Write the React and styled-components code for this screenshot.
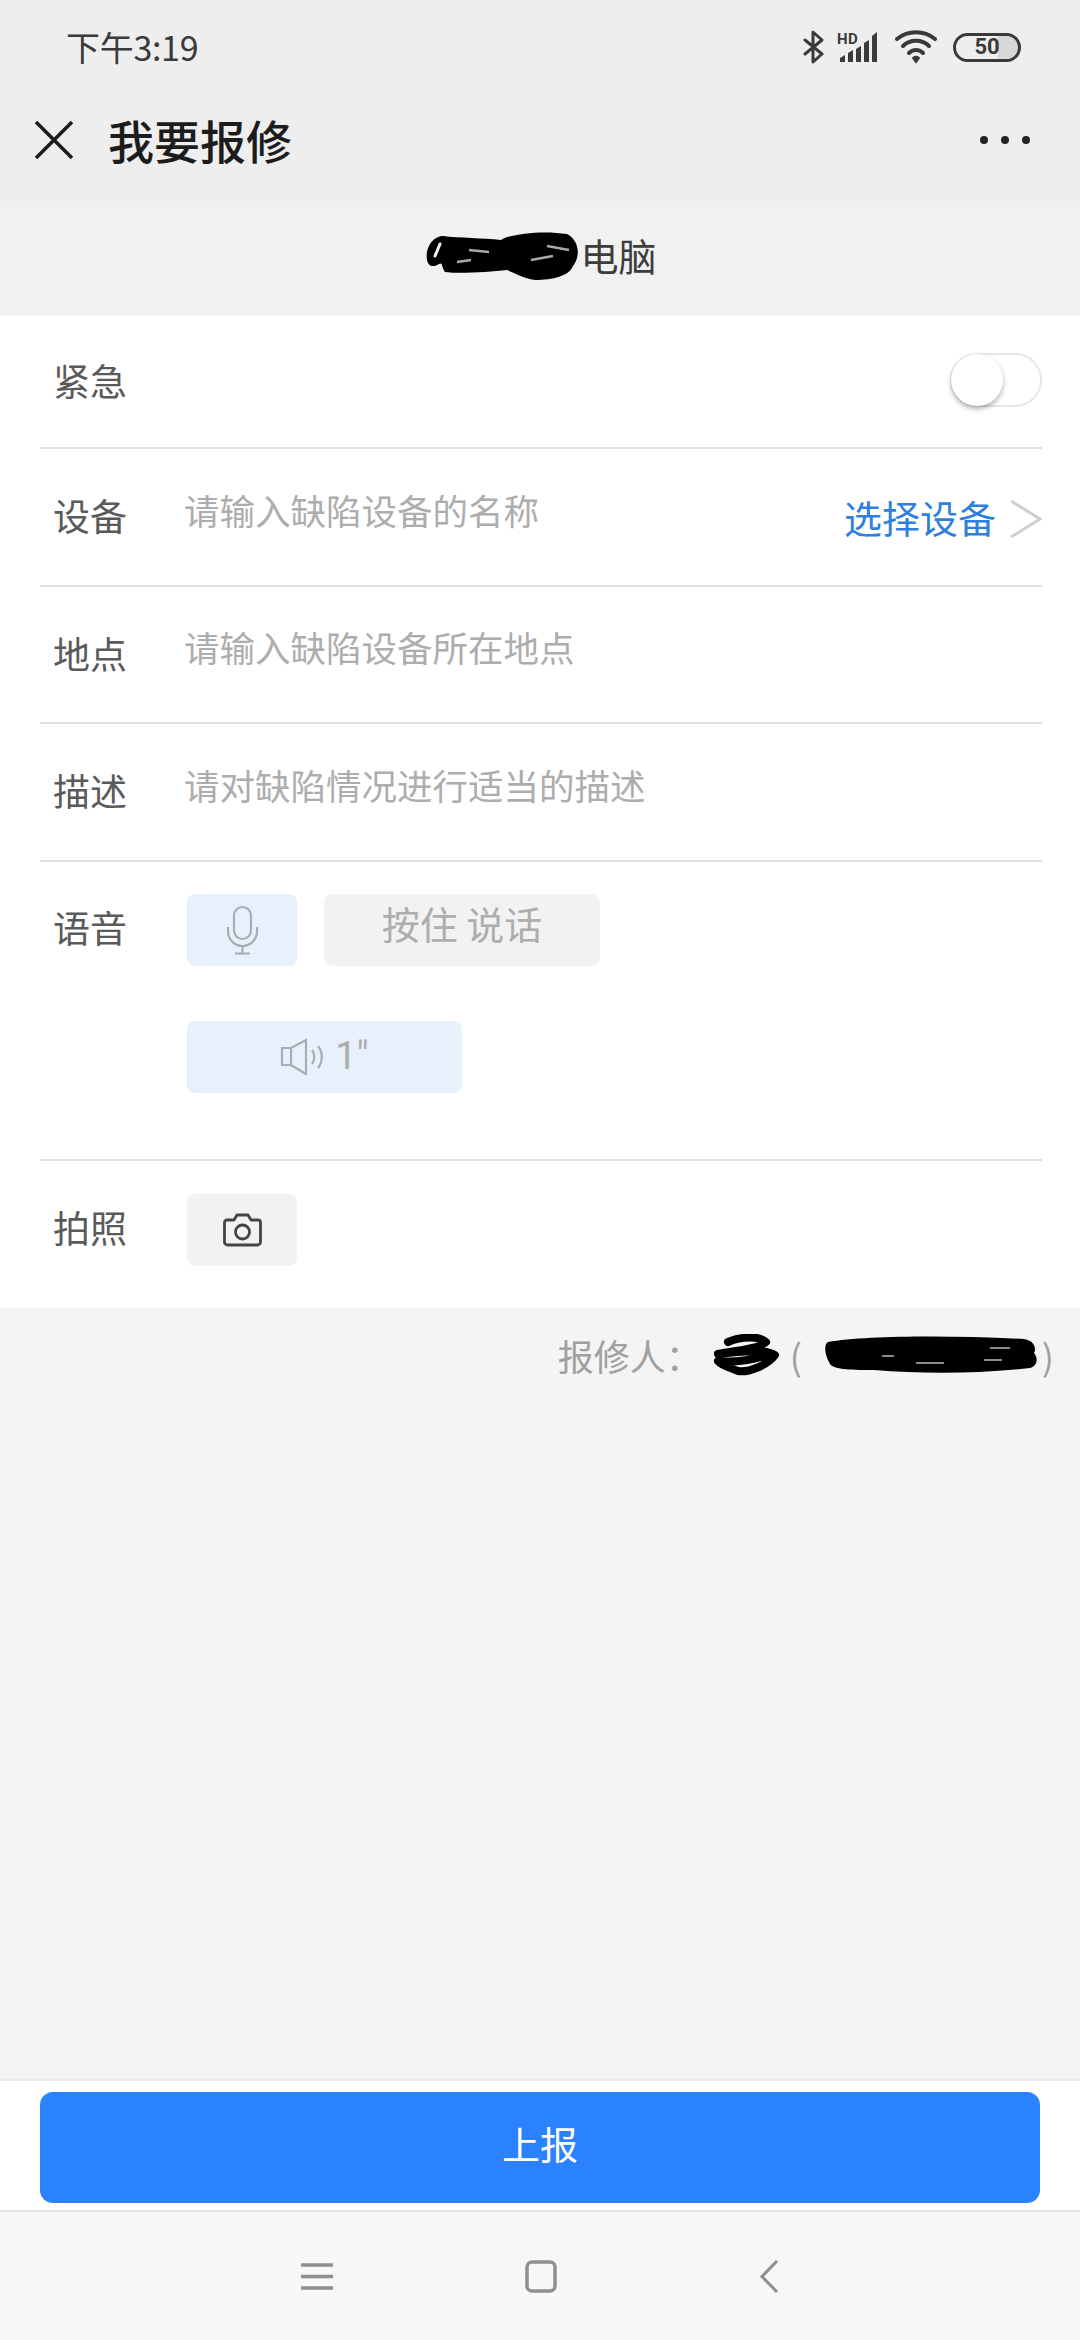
import React from "react";
import styled, { createGlobalStyle } from "styled-components";

const Global = createGlobalStyle`
  html, body { margin: 0; padding: 0; background: #f4f4f4; }
  * { box-sizing: border-box; }
  body { font-family: "Noto Sans CJK SC", "Noto Sans", sans-serif; }
`;

const Page = styled.div`
  width: 1080px; height: 2340px; display: flex; flex-direction: column; overflow: hidden; background: #f4f4f4;
`;
const TopChrome = styled.header`
  height: 207px; background: #eeeeee; display: flex; flex-direction: column;
`;
const StatusBar = styled.div`
  height: 94px; display: flex; align-items: center; justify-content: space-between; padding: 0 59px 0 66px;
`;
const Time = styled.span`
  font-size: 34px; color: #3a3a3a; line-height: 1; font-family: "Noto Sans CJK SC", sans-serif; letter-spacing: -0.3px;
`;
const StatusIcons = styled.div`
  display: flex; align-items: center; height: 40px;
`;
const Battery = styled.span`
  width: 68px; height: 29px; margin-left: 16px; border: 3px solid #3a3a3a; border-radius: 15px;
  display: flex; align-items: center; justify-content: center;
  font: 700 22px/1 "Roboto", sans-serif; color: #3a3a3a;
  background: linear-gradient(90deg, transparent 68%, #d8d8d8 68%);
`;
const NavBar = styled.div`
  height: 94px; display: flex; align-items: center; padding: 0 50px 2px 34px;
`;
const Title = styled.h1`
  margin: 0 0 0 34px; flex: 1; font-size: 46px; font-weight: 500; color: #1c1c1c; line-height: 1.2;
`;
const Dots = styled.div`
  display: flex; gap: 13px;
  i { width: 8px; height: 8px; border-radius: 50%; background: #222; display: block; }
`;
const SubHeader = styled.div`
  height: 109px; background: #f1f1f1; display: flex; align-items: center; justify-content: center; padding-bottom: 14px;
  font-size: 38px; color: #3c3c3c;
`;
const Drawing = styled.svg`
  display: block; flex: none;
`;
const Form = styled.section`
  background: #fff; height: 992px; padding: 0 38px 0 40px; display: flex; flex-direction: column; flex: none;
`;
const Row = styled.div`
  height: ${(p) => p.$h}px; display: flex; flex: none;
  align-items: ${(p) => (p.$top ? "flex-start" : "center")};
  padding-top: ${(p) => p.$pt || 0}px;
  border-bottom: ${(p) => (p.$last ? "none" : "2px solid #dfdfdf")};
`;
const Label = styled.span`
  width: 147px; flex: none; padding-left: 13px; font-size: 37px; color: #5a5a5a; line-height: 72px;
  margin: ${(p) => (p.$top ? "-3px 0 0" : "0 0 4px")};
`;
const Placeholder = styled.span`
  flex: 1; font-size: 35.5px; color: #adadad; margin: 0 0 15px -3px; line-height: 50px;
`;
const LinkText = styled.span`
  font-size: 38px; color: #2f80dc; line-height: 50px;
`;
const Toggle = styled.span`
  margin: -3px 0 0 auto; width: 92px; height: 54px; border: 2px solid #e6e6e6; border-radius: 27px; background: #fff;
  display: flex; align-items: center;
`;
const Knob = styled.span`
  width: 52px; height: 52px; border-radius: 50%; background: #fff; margin-left: -1px;
  box-shadow: 0 3px 5px rgba(0,0,0,.3);
`;
const VoiceCol = styled.div`
  display: flex; flex-direction: column; gap: 55px;
`;
const BtnLine = styled.div`
  display: flex; gap: 27px;
`;
const Tile = styled.div`
  width: ${(p) => p.$w}px; height: 72px; border-radius: 8px; background: ${(p) => (p.$blue ? "#e8f0fc" : "#f2f2f2")};
  display: flex; align-items: center; justify-content: center; gap: 10px;
  font-size: 38px; color: #adadad; line-height: 1;
`;
const TileText = styled.span`
  margin-bottom: ${(p) => p.$mb || 0}px; font-family: ${(p) => (p.$num ? '"Roboto", sans-serif' : "inherit")};
`;
const Reporter = styled.div`
  height: 94px; display: flex; align-items: center; justify-content: flex-end; padding-right: 26px;
  font-size: 36px; color: #a0a0a0; flex: none;
`;
const Colon = styled.span`
  width: 46px;
`;
const Paren = styled.span`
  margin: ${(p) => p.$m};
`;
const Spacer = styled.div`
  flex: 1;
`;
const Footer = styled.div`
  height: 133px; background: #fff; border-top: 2px solid #ebebeb; padding: 11px 40px 0; flex: none;
  border-bottom: 2px solid #e2e2e2;
`;
const Submit = styled.button`
  width: 1000px; height: 111px; border: 0; border-radius: 13px; background: #2b82ff; color: #fff;
  font: 400 38px/1 "Noto Sans CJK SC", sans-serif; padding: 0 0 10px; display: block;
`;
const SysNav = styled.nav`
  height: 128px; background: #f7f7f7; display: flex; align-items: center; padding-left: 301px; flex: none;
`;
const NavGap = styled.span`
  width: ${(p) => p.$w}px; flex: none;
`;

export default function App() {
  return (
    <Page>
      <Global />
      <TopChrome>
        <StatusBar>
          <Time>下午3:19</Time>
          <StatusIcons>
            <Drawing width="22" height="34" viewBox="0 0 22 34" fill="none" stroke="#3a3a3a" strokeWidth="3">
              <path d="M2 10 L19 24 L10 32 V2 L19 10 L2 24" strokeLinejoin="round" strokeLinecap="round" />
            </Drawing>
            <Drawing width="42" height="32" viewBox="0 0 42 32" style={{ marginLeft: 12 }} fill="#3a3a3a">
              <text x="0" y="13" fontFamily="Roboto, sans-serif" fontWeight="700" fontSize="15" letterSpacing="0.5">HD</text>
              <path d="M1 31 v-4 l5 -3 v7z M9 31 V22 l5 -3 V31z M17 31 V18 l5 -3 V31z M25 31 V12 l5 -3 V31z M33 31 V5 l5 -4 V31z" transform="translate(2 0)" />
            </Drawing>
            <Drawing width="42" height="34" viewBox="0 0 42 34" style={{ marginLeft: 16 }} fill="none" stroke="#3a3a3a" strokeWidth="4" strokeLinecap="round">
              <path d="M2 9 C13 0 29 0 40 9" />
              <path d="M8 16 C15 9 27 9 34 16" />
              <path d="M14 23 C18 19 24 19 28 23" />
              <path d="M18 28 L21 32 L24 28 C22 26.5 20 26.5 18 28Z" fill="#3a3a3a" strokeWidth="2" />
            </Drawing>
            <Battery>50</Battery>
          </StatusIcons>
        </StatusBar>
        <NavBar>
          <Drawing width="40" height="40" viewBox="0 0 40 40" fill="none" stroke="#1c1c1c" strokeWidth="3.5">
            <path d="M2 2 L38 38 M38 2 L2 38" />
          </Drawing>
          <Title>我要报修</Title>
          <Dots><i /><i /><i /></Dots>
        </NavBar>
      </TopChrome>

      <SubHeader>
        <Drawing width="157" height="50" viewBox="0 0 157 50" fill="#000">
          <path d="M4 30 C2 18 10 6 20 6 C36 8 60 8 78 10 C86 4 120 0 144 4 C156 10 158 26 150 36 C146 46 130 50 112 50 C100 48 94 44 84 40 C66 42 36 44 22 42 C18 36 20 32 16 34 C10 38 5 36 4 30Z" />
          <path d="M46 20 L66 22 M124 16 L146 20 M34 32 L48 30 M108 30 L130 26" stroke="#a8a8a8" strokeWidth="2.4" fill="none" />
          <path d="M12 26 L17 14" stroke="#f1f1f1" strokeWidth="3" strokeLinecap="round" fill="none" />
        </Drawing>
        <span>电脑</span>
      </SubHeader>

      <Form>
        <Row $h={133}>
          <Label>紧急</Label>
          <Toggle><Knob /></Toggle>
        </Row>
        <Row $h={138}>
          <Label>设备</Label>
          <Placeholder>请输入缺陷设备的名称</Placeholder>
          <LinkText>选择设备</LinkText>
          <Drawing width="33" height="40" viewBox="0 0 33 40" style={{ marginLeft: 13, marginTop: 4 }} fill="none" stroke="#cfcfcf" strokeWidth="3">
            <path d="M2 2 L31 20 L2 38" />
          </Drawing>
        </Row>
        <Row $h={137}>
          <Label>地点</Label>
          <Placeholder>请输入缺陷设备所在地点</Placeholder>
        </Row>
        <Row $h={138}>
          <Label>描述</Label>
          <Placeholder>请对缺陷情况进行适当的描述</Placeholder>
        </Row>
        <Row $h={299} $top $pt={32}>
          <Label $top>语音</Label>
          <VoiceCol>
            <BtnLine>
              <Tile $w={110} $blue>
                <Drawing width="33" height="50" viewBox="0 0 33 50" fill="none" stroke="#a9adb2" strokeWidth="2.2">
                  <rect x="8" y="2" width="17" height="32" rx="8.5" />
                  <path d="M2 22 V26 C2 35 9 41 16.5 41 C24 41 31 35 31 26 V22 M16.5 41 V48 M9 48.5 H24" />
                </Drawing>
              </Tile>
              <Tile $w={276}><TileText $mb={14}>按住 说话</TileText></Tile>
            </BtnLine>
            <Tile $w={275} $blue>
              <Drawing width="45" height="38" viewBox="0 0 45 38" fill="none" stroke="#a9adb2" strokeWidth="2.2">
                <path d="M2 10 H11 L26 2 V36 L11 27 H2 Z M11 10 V27" />
                <path d="M32 12 C35 16 35 22 32 26 M38 8 C43 14 43 24 38 30" />
              </Drawing>
              <TileText $num $mb={2}>1"</TileText>
            </Tile>
          </VoiceCol>
        </Row>
        <Row $h={147} $top $pt={33} $last>
          <Label $top>拍照</Label>
          <Tile $w={110}>
            <Drawing width="39" height="34" viewBox="0 0 39 34" fill="none" stroke="#444" strokeWidth="2.8" strokeLinejoin="round">
              <path d="M4 7 H11 L14 2 H25 L28 7 H35 A2.5 2.5 0 0 1 37.5 9.5 V29 A3 3 0 0 1 34.5 32 H4.5 A3 3 0 0 1 1.5 29 V9.5 A2.5 2.5 0 0 1 4 7Z" />
              <circle cx="19.5" cy="19" r="7" />
            </Drawing>
          </Tile>
        </Row>
      </Form>

      <Reporter>
        <span>报修人</span>
        <Colon>：</Colon>
        <Drawing width="68" height="42" viewBox="0 0 68 42" fill="none" stroke="#000" strokeWidth="8" strokeLinecap="round" strokeLinejoin="round">
          <path d="M16 8 C30 2 48 2 54 8 C46 16 22 16 6 20 C22 18 52 14 63 21 C56 31 36 39 26 37 C16 33 9 31 6 27 C24 29 42 25 52 22" />
        </Drawing>
        <Paren $m="0 22px 0 10px">(</Paren>
        <Drawing width="214" height="38" viewBox="0 0 214 38" fill="#000">
          <path d="M4 6 C40 0 120 -1 200 3 C212 5 212 14 210 17 C214 21 214 30 206 32 C150 38 100 38 50 34 C30 34 10 34 6 28 C0 18 0 8 4 6Z" />
          <path d="M58 20 H70 M92 27 H120 M166 12 H186 M160 24 H178" stroke="#b8b8b8" strokeWidth="1.6" />
        </Drawing>
        <Paren $m="0 0 0 4px">)</Paren>
      </Reporter>

      <Spacer />

      <Footer><Submit>上报</Submit></Footer>

      <SysNav>
        <Drawing width="32" height="27" viewBox="0 0 32 27" fill="none" stroke="#8f8f8f" strokeWidth="3.5">
          <path d="M0 2 H32 M0 13.5 H32 M0 25 H32" />
        </Drawing>
        <NavGap $w={192} />
        <Drawing width="32" height="33" viewBox="0 0 32 33" fill="none" stroke="#8f8f8f" strokeWidth="3.5">
          <rect x="2" y="2" width="28" height="29" rx="5" />
        </Drawing>
        <NavGap $w={202} />
        <Drawing width="20" height="33" viewBox="0 0 20 33" fill="none" stroke="#8f8f8f" strokeWidth="3">
          <path d="M18 1 L3 16.5 L18 32" />
        </Drawing>
      </SysNav>
    </Page>
  );
}
